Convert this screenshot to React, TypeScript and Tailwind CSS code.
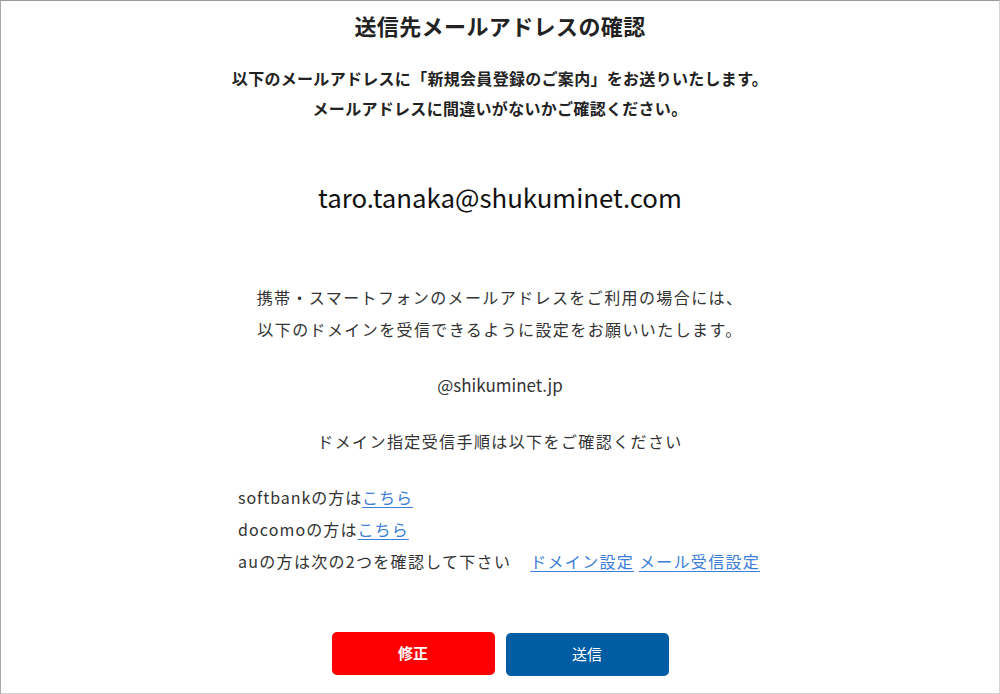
import React from 'react'

const font = { fontFamily: '"Noto Sans CJK JP", "Noto Sans", sans-serif' }

const linkClass = 'text-[#3b7dd8] underline underline-offset-[3px] decoration-1'

const App = () => {
  return (
    <div
      className="w-[1000px] h-[694px] bg-white border border-t-[#9a9a9a] border-l-[#a8a8a8] border-r-[#d4d4d4] border-b-[#d0d0d0] text-[#333]"
      style={font}
    >
      <h1 className="text-center text-[22px] leading-[48px] font-bold text-[#222] tracking-[0.4px]">
        送信先メールアドレスの確認
      </h1>

      <div className="mt-[14px] text-center text-[16px] leading-[30px] font-bold text-[#222] tracking-[0.3px]">
        <p>以下のメールアドレスに「新規会員登録のご案内」をお送りいたします。</p>
        <p>メールアドレスに間違いがないかご確認ください。</p>
      </div>

      <p className="mt-[54px] text-center text-[25.8px] leading-[40px] text-[#111]">
        taro.tanaka@shukuminet.com
      </p>

      <div className="mt-[64px] text-center text-[16px] leading-[32px] tracking-[1.4px]">
        <p>携帯・スマートフォンのメールアドレスをご利用の場合には、</p>
        <p>以下のドメインを受信できるように設定をお願いいたします。</p>
      </div>

      <p className="mt-[24px] text-center text-[17px] leading-[32px]">@shikuminet.jp</p>

      <p className="mt-[24px] text-center text-[16px] leading-[32px] tracking-[1.4px]">
        ドメイン指定受信手順は以下をご確認ください
      </p>

      <ul className="mt-[24px] w-[524px] mx-auto text-[16px] leading-[32px] whitespace-nowrap">
        <li className="tracking-[0.95px]">
          softbankの方は<a href="#" className={linkClass}>こちら</a>
        </li>
        <li className="tracking-[1.1px]">
          docomoの方は<a href="#" className={linkClass}>こちら</a>
        </li>
        <li className="tracking-[1.3px]">
          auの方は次の2つを確認して下さい
          <a href="#" className={`${linkClass} ml-[19px]`}>ドメイン設定</a>{' '}
          <a href="#" className={linkClass}>メール受信設定</a>
        </li>
      </ul>

      <div className="mt-[55px] flex justify-center items-start gap-[11px]">
        <button
          type="button"
          className="w-[163px] h-[43px] rounded-[5px] bg-[#ff0000] text-white text-[15px] font-bold"
        >
          修正
        </button>
        <button
          type="button"
          className="mt-px w-[163px] h-[43px] rounded-[5px] bg-[#005ca3] text-white text-[15px]"
        >
          送信
        </button>
      </div>
    </div>
  )
}

export default App
